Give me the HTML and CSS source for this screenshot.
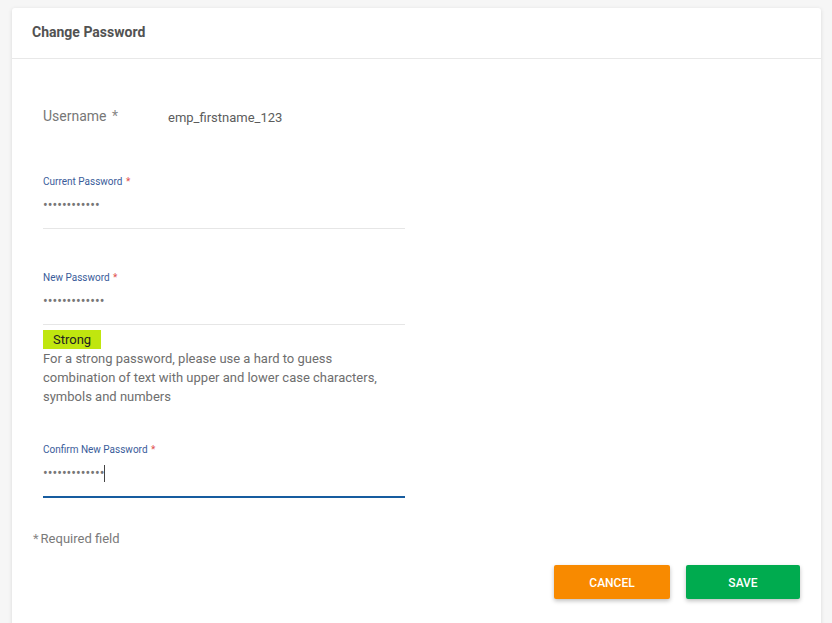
FILE: index.html
```html
<!DOCTYPE html>
<html lang="en">
<head>
<meta charset="utf-8">
<title>Change Password</title>
<link rel="stylesheet" href="styles.css">
</head>
<body>
<div class="card">
  <div class="card-header">
    <h1 class="title">Change Password</h1>
  </div>
  <form class="form">
    <div class="row-username">
      <span class="static-label">Username <span class="ast-grey">*</span></span>
      <span class="static-value">emp_firstname_123</span>
    </div>

    <div class="field field-current">
      <label class="field-label">Current Password <span class="ast">*</span></label>
      <div class="field-input"><span class="dots">••••••••••••</span></div>
    </div>

    <div class="field field-new">
      <label class="field-label">New Password <span class="ast">*</span></label>
      <div class="field-input"><span class="dots">•••••••••••••</span></div>
    </div>

    <div class="strength">Strong</div>
    <p class="help">For a strong password, please use a hard to guess combination of text with upper and lower case characters, symbols and numbers</p>

    <div class="field field-confirm">
      <label class="field-label">Confirm New Password <span class="ast">*</span></label>
      <div class="field-input focused"><span class="dots">•••••••••••••</span><span class="caret"></span></div>
    </div>
  </form>
  <div class="required"><span class="ast-req">*</span>Required field</div>
  <div class="actions">
    <button type="button" class="btn btn-cancel">CANCEL</button>
    <button type="button" class="btn btn-save">SAVE</button>
  </div>
</div>
</body>
</html>
```

FILE: styles.css
```css
html, body {
  margin: 0;
  padding: 0;
  background: #f6f6f6;
  font-family: Roboto, "Liberation Sans", Arial, sans-serif;
  height: 100%;
  overflow: hidden;
}

.card {
  margin: 8px 11px 0 12px;
  background: #ffffff;
  box-shadow: 0 1px 4px rgba(0, 0, 0, 0.12);
  border-radius: 3px 3px 0 0;
  height: 640px;
}

.card-header {
  height: 51px;
  box-sizing: border-box;
  display: flex;
  align-items: center;
  padding-left: 20px;
  padding-bottom: 2px;
  border-bottom: 1px solid #e8e8e8;
}

.title {
  margin: 0;
  font-size: 14px;
  font-weight: 700;
  color: #525252;
}

.form {
  padding: 0 31px;
  width: 362px;
}

.row-username {
  display: flex;
  align-items: flex-start;
  padding-top: 47px;
  height: 20px;
}

.static-label {
  width: 125px;
  font-size: 14px;
  line-height: 20px;
  color: #777777;
}

.ast-grey {
  color: #888;
  margin-left: 2px;
}

.static-value {
  font-size: 13px;
  line-height: 20px;
  margin-top: 2px;
  color: #5c5c5c;
}

.field-current {
  margin-top: 49px;
}

.field-new {
  margin-top: 42px;
}

.field-confirm {
  margin-top: 37px;
}

.field-label {
  display: block;
  font-size: 10px;
  line-height: 14px;
  color: #3a5c9a;
}

.ast {
  color: #e0504d;
  margin-left: 1px;
}

.field-input {
  margin-top: 6px;
  height: 33px;
  border-bottom: 1px solid #e6e6e6;
  display: flex;
  align-items: flex-start;
}

.field-input.focused {
  border-bottom: 2px solid #175c9f;
}

.dots {
  font-size: 14px;
  line-height: 20px;
  color: #777777;
}

.caret {
  display: inline-block;
  width: 1px;
  height: 17px;
  margin-top: 2px;
  background: #444;
}

.strength {
  margin-top: 5px;
  width: 48px;
  height: 19px;
  padding-left: 10px;
  background: #c0e60f;
  color: #222;
  font-size: 13px;
  line-height: 19px;
}

.help {
  margin: 0;
  font-size: 13px;
  line-height: 19px;
  color: #6e6e6e;
}

.required {
  margin-top: 31px;
  padding-left: 21px;
  font-size: 13px;
  line-height: 19px;
  color: #7a7a7a;
}

.ast-req {
  color: #888;
  margin-right: 2px;
}

.actions {
  margin-top: 17px;
  padding-right: 21px;
  display: flex;
  justify-content: flex-end;
  gap: 16px;
}

.btn {
  height: 34px;
  padding: 2px 0 0 0;
  border: none;
  border-radius: 2px;
  color: #ffffff;
  font-family: Roboto, "Liberation Sans", Arial, sans-serif;
  font-size: 12px;
  font-weight: 500;
  box-shadow: 0 2px 4px rgba(0, 0, 0, 0.25);
  cursor: pointer;
}

.btn-cancel {
  width: 116px;
  background: #f88a00;
}

.btn-save {
  width: 114px;
  background: #00ab4f;
}
```
